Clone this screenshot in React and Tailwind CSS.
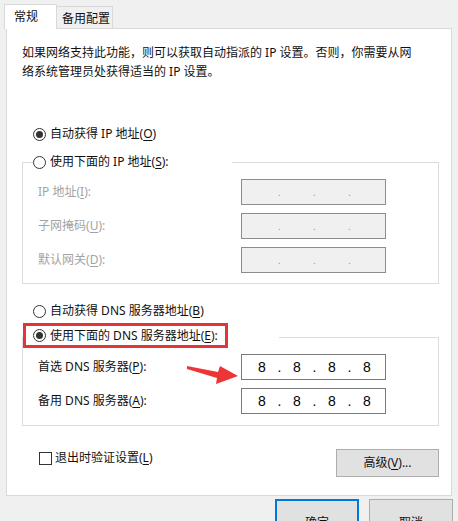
import React from "react";

const FONT = "font-['Noto_Sans','Noto_Sans_CJK_SC',sans-serif]";

function Radio({ checked }) {
  return (
    <span className="flex h-[13px] w-[13px] shrink-0 items-center justify-center rounded-full border border-[#333333] bg-white">
      {checked && <span className="h-[7px] w-[7px] rounded-full bg-[#333333]" />}
    </span>
  );
}

function Key({ children }) {
  return <u className="underline-offset-[2px]">{children}</u>;
}

function IpBox({ value, disabled }) {
  const parts = value ? value.split(".") : ["", "", "", ""];
  return (
    <div
      className={
        "flex h-[26px] w-[145px] items-center border pl-[7px] " +
        (disabled ? "border-[#8c8c8c] bg-[#f0f0f0]" : "border-[#7a7a7a] bg-white")
      }
    >
      {parts.map((part, i) => (
        <React.Fragment key={i}>
          <span className="w-[26px] text-center font-['Liberation_Sans',sans-serif] text-[14px] text-black">
            {part}
          </span>
          {i < 3 && (
            <span
              className={
                "w-[9px] text-center font-['Liberation_Sans',sans-serif] " +
                (disabled ? "text-[10px] text-[#9a9a9a]" : "text-[14px] text-black")
              }
            >
              .
            </span>
          )}
        </React.Fragment>
      ))}
    </div>
  );
}

export default function App() {
  const ipRows = [
    { label: "IP 地址", key: "I" },
    { label: "子网掩码", key: "U" },
    { label: "默认网关", key: "D" },
  ];

  const dnsRows = [
    { label: "首选 DNS 服务器", key: "P" },
    { label: "备用 DNS 服务器", key: "A" },
  ];

  return (
    <div className={"h-[521px] w-[458px] overflow-hidden bg-[#f0f0f0] text-[12px] text-[#111] " + FONT}>
      {/* tabs */}
      <div className="relative z-10 -mb-px flex h-[29px] items-end pl-[4px]">
        <div className="flex h-[25px] w-[53px] items-start border border-b-0 border-[#d9d9d9] bg-white pl-[9px] pt-[2px] leading-[20px]">
          常规
        </div>
        <div className="mb-px flex h-[22px] w-[56px] items-start self-end border border-b-0 border-l-0 border-[#d9d9d9] bg-[#f0f0f0] pl-[5px] pt-[2px] leading-[20px]">
          备用配置
        </div>
      </div>

      {/* panel */}
      <div className="relative ml-[6px] h-[468px] w-[446px] border border-[#d9d9d9] bg-white pl-[15px] pt-[14px]">
        <p className="leading-[19px]">
          如果网络支持此功能，则可以获取自动指派的 IP 设置。否则，你需要从网
          <br />
          络系统管理员处获得适当的 IP 设置。
        </p>

        <div className="ml-[11px] mt-[43px] flex h-[20px] items-center gap-[4px]">
          <Radio checked />
          <span>
            自动获得 IP 地址(<Key>O</Key>)
          </span>
        </div>

        <fieldset className="mt-[8px] w-[417px] border border-[#dcdcdc] px-0 pb-[10px]">
          <legend className="ml-[10px] flex h-[20px] w-[199px] items-center gap-[4px] bg-white">
            <Radio />
            <span>
              使用下面的 IP 地址(<Key>S</Key>):
            </span>
          </legend>
          <div className="grid grid-cols-[203px_145px] gap-y-[8px] pl-[15px] pt-[7px]">
            {ipRows.map((row) => (
              <React.Fragment key={row.key}>
                <div className="flex h-[26px] items-center text-[#a3a3a3]">
                  <span>
                    {row.label}(<Key>{row.key}</Key>):
                  </span>
                </div>
                <IpBox disabled />
              </React.Fragment>
            ))}
          </div>
        </fieldset>

        <div className="ml-[11px] mt-[17px] flex h-[20px] items-center gap-[4px]">
          <Radio />
          <span>
            自动获得 DNS 服务器地址(<Key>B</Key>)
          </span>
        </div>

        <fieldset className="mt-[2px] w-[417px] border border-[#dcdcdc] px-0 pb-[11px]">
          <legend className="flex h-[28px] items-start">
            <div className="flex h-[25px] w-[205px] items-center gap-[4px] border-[3px] border-[#e3343a] pl-[7px]">
              <Radio checked />
              <span>
                使用下面的 DNS 服务器地址(<Key>E</Key>):
              </span>
            </div>
            <div className="w-[51px]" />
          </legend>
          <div className="grid grid-cols-[203px_145px] gap-y-[8px] pl-[15px] pt-[3px]">
            {dnsRows.map((row) => (
              <React.Fragment key={row.key}>
                <div className="flex h-[26px] items-center">
                  <span>
                    {row.label}(<Key>{row.key}</Key>):
                  </span>
                </div>
                <IpBox value="8.8.8.8" />
              </React.Fragment>
            ))}
          </div>
        </fieldset>

        <div className="mt-[22px] flex w-[417px] items-start justify-between">
          <div className="ml-[17px] flex h-[20px] items-center gap-[3px]">
            <span className="h-[13px] w-[13px] border border-[#333333] bg-white" />
            <span>
              退出时验证设置(<Key>L</Key>)
            </span>
          </div>
          <button className="mt-px flex h-[28px] w-[103px] items-center justify-center border border-[#adadad] bg-[#e1e1e1]">
            高级(<Key>V</Key>)...
          </button>
        </div>

        {/* red annotation arrow */}
        <svg
          className="absolute left-[178px] top-[331px]"
          width="56"
          height="26"
          viewBox="0 0 56 26"
        >
          <polygon points="2,6 33,12 35,6 53,16 31,24 32,18 2,9" fill="#ee3535" />
        </svg>
      </div>

      {/* dialog buttons */}
      <div className="mt-[3px] flex justify-end gap-[10px] pr-[5px]">
        <button className="flex h-[40px] w-[84px] items-start justify-center border-2 border-[#0078d7] bg-[#e1e1e1] pt-[12px] leading-[20px]">
          确定
        </button>
        <button className="flex h-[40px] w-[84px] items-start justify-center border border-[#adadad] bg-[#e1e1e1] pt-[13px] leading-[20px]">
          取消
        </button>
      </div>
    </div>
  );
}
